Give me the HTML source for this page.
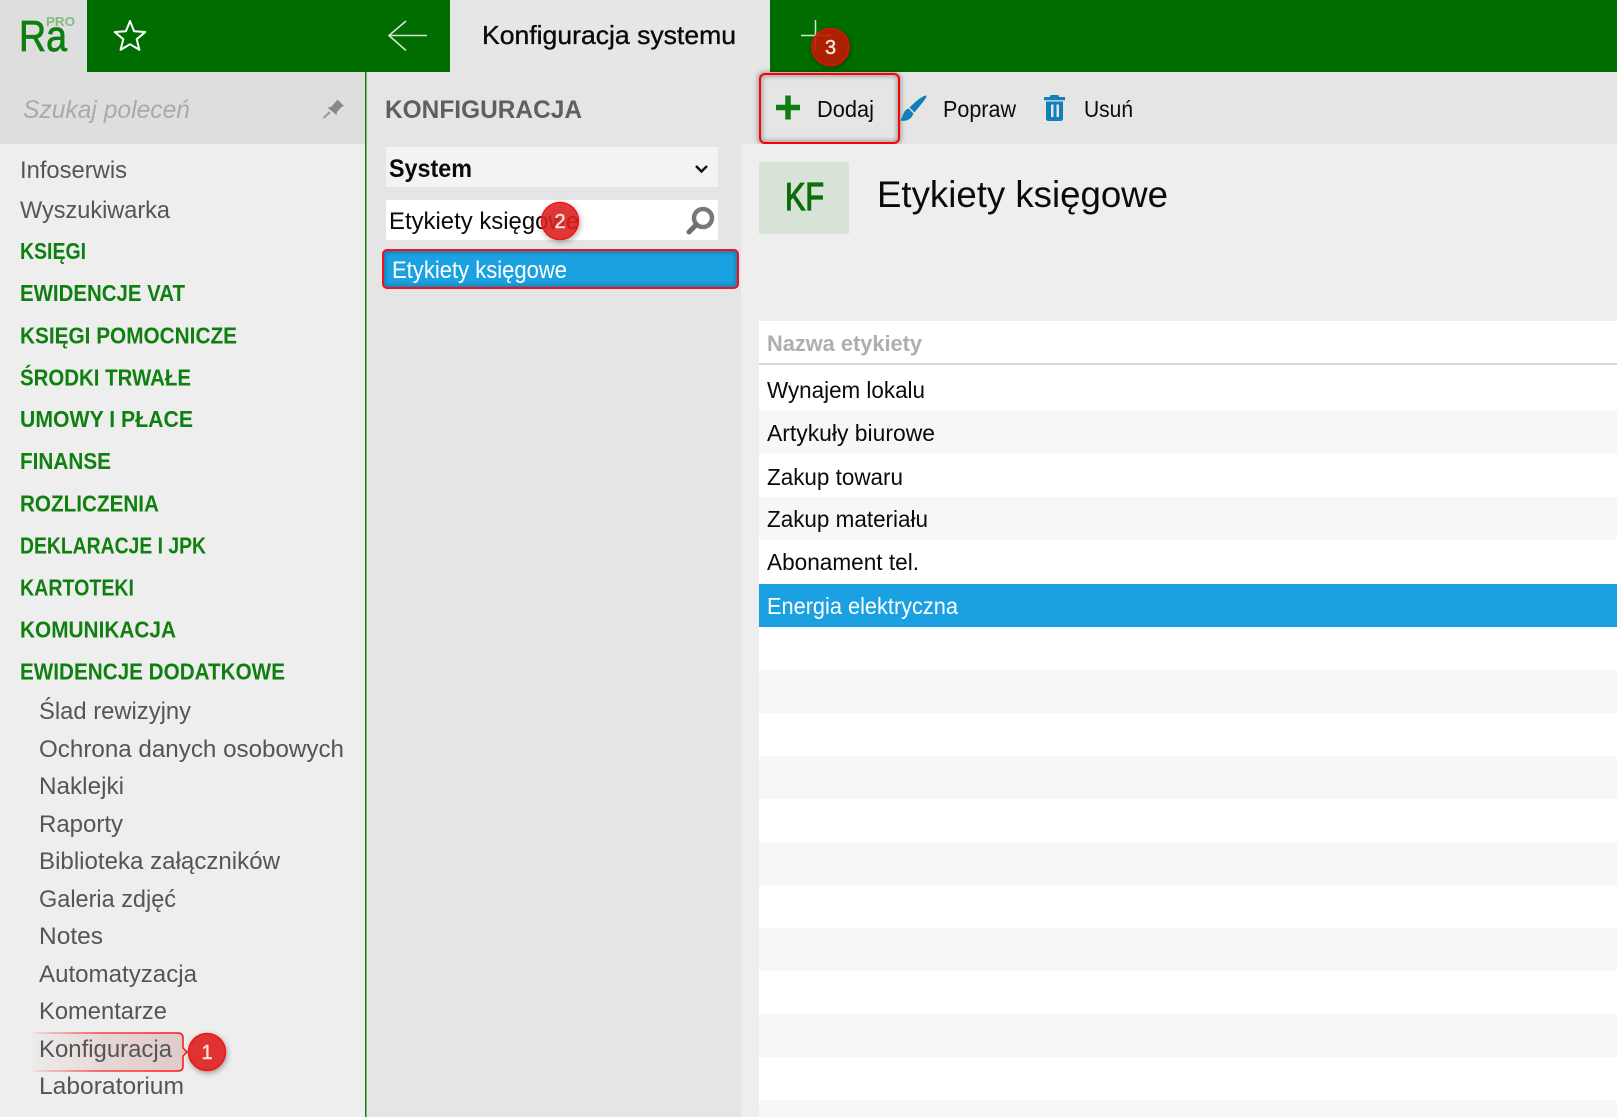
<!DOCTYPE html>
<html><head><meta charset="utf-8"><style>
html,body{margin:0;padding:0;width:1617px;height:1117px;overflow:hidden;background:#eee}
svg{display:block}
text{font-family:"Liberation Sans",sans-serif;white-space:pre}
.s{font-size:24px;fill:#555}
.b{font-size:23px;font-weight:bold;fill:#0f7f0f}
.r{font-size:23px;fill:#0a0a0a}
</style></head><body>
<svg width="1617" height="1117" viewBox="0 0 1617 1117" xmlns="http://www.w3.org/2000/svg">
<defs>
<linearGradient id="g1" x1="0" x2="1"><stop offset="0" stop-color="#eadcdc" stop-opacity=".2"/><stop offset=".5" stop-color="#e6d6d6"/><stop offset="1" stop-color="#dfc9c9"/></linearGradient>
<linearGradient id="g2" x1="0" x2="1"><stop offset="0" stop-color="#ff2020" stop-opacity=".1"/><stop offset=".4" stop-color="#ff2020" stop-opacity=".8"/><stop offset="1" stop-color="#ff1010"/></linearGradient>
<filter id="sh" x="-30%" y="-30%" width="160%" height="160%"><feDropShadow dx="1" dy="2" stdDeviation="3" flood-color="#000" flood-opacity=".35"/></filter>
<filter id="bl" x="-10%" y="-20%" width="120%" height="140%"><feGaussianBlur stdDeviation="2.500"/></filter>
<clipPath id="rowclip"><rect x="383" y="250" width="355" height="38" rx="4"/></clipPath>
</defs>
<rect width="1617" height="1117" fill="#eee"/>
<!-- header -->
<rect x="0" y="0" width="87" height="72" fill="#dedede"/>
<rect x="87" y="0" width="363" height="72" fill="#006d00"/>
<rect x="450" y="0" width="320" height="72" fill="#e6e6e6"/>
<rect x="770" y="0" width="847" height="72" fill="#006d00"/>
<text x="19" y="51" font-size="44" fill="#0e7e0e" stroke="#0e7e0e" stroke-width=".8" textLength="48" lengthAdjust="spacingAndGlyphs">Ra</text>
<text x="46" y="26" font-size="12.500" font-weight="bold" fill="#84b984" textLength="29" lengthAdjust="spacingAndGlyphs">PRO</text>
<path d="M130 21L134.100 31.300 145.200 32.060 136.700 39.200 139.400 49.900 130 44.200 120.600 49.900 123.300 39.200 114.800 32.060 125.900 31.300Z" fill="none" stroke="#fff" stroke-width="2" stroke-linejoin="round"/>
<path d="M427 35.500H389M406 21l-17 14.500 17 15" fill="none" stroke="#d5e6d5" stroke-width="1.600"/>
<text x="482" y="44" font-size="26" fill="#0a0a0a" stroke="#0a0a0a" stroke-width=".35" textLength="254" lengthAdjust="spacingAndGlyphs">Konfiguracja systemu</text>
<path d="M801 35.500H831M815.500 20V50" stroke="#d5e6d5" stroke-width="1.500" fill="none"/>
<!-- sidebar -->
<rect x="0" y="72" width="365" height="72" fill="#dedede"/>
<text x="23" y="118" font-size="25" font-style="italic" fill="#aaa" textLength="167" lengthAdjust="spacingAndGlyphs">Szukaj poleceń</text>
<path d="M337.500 99.500L344 106 341.500 107 337 112 336.500 115 327.500 107.500 331 107 335.500 102Z" fill="#888"/>
<path d="M330 112L323.500 118" stroke="#999" stroke-width="2" fill="none"/>
<rect x="365" y="72" width="1.500" height="1045" fill="#0f7f0f"/>
<text class="s" x="20" y="178" textLength="107" lengthAdjust="spacingAndGlyphs">Infoserwis</text>
<text class="s" x="20" y="218" textLength="150" lengthAdjust="spacingAndGlyphs">Wyszukiwarka</text>
<text class="b" x="20" y="259" textLength="66" lengthAdjust="spacingAndGlyphs">KSIĘGI</text>
<text class="b" x="20" y="301" textLength="165" lengthAdjust="spacingAndGlyphs">EWIDENCJE VAT</text>
<text class="b" x="20" y="343.500" textLength="217" lengthAdjust="spacingAndGlyphs">KSIĘGI POMOCNICZE</text>
<text class="b" x="20" y="385.500" textLength="171" lengthAdjust="spacingAndGlyphs">ŚRODKI TRWAŁE</text>
<text class="b" x="20" y="427" textLength="173" lengthAdjust="spacingAndGlyphs">UMOWY I PŁACE</text>
<text class="b" x="20" y="469" textLength="91" lengthAdjust="spacingAndGlyphs">FINANSE</text>
<text class="b" x="20" y="511.500" textLength="139" lengthAdjust="spacingAndGlyphs">ROZLICZENIA</text>
<text class="b" x="20" y="553.500" textLength="186" lengthAdjust="spacingAndGlyphs">DEKLARACJE I JPK</text>
<text class="b" x="20" y="595.500" textLength="114" lengthAdjust="spacingAndGlyphs">KARTOTEKI</text>
<text class="b" x="20" y="637.500" textLength="156" lengthAdjust="spacingAndGlyphs">KOMUNIKACJA</text>
<text class="b" x="20" y="679.500" textLength="265" lengthAdjust="spacingAndGlyphs">EWIDENCJE DODATKOWE</text>
<text class="s" x="39" y="719" textLength="152" lengthAdjust="spacingAndGlyphs">Ślad rewizyjny</text>
<text class="s" x="39" y="757" textLength="305" lengthAdjust="spacingAndGlyphs">Ochrona danych osobowych</text>
<text class="s" x="39" y="794" textLength="85" lengthAdjust="spacingAndGlyphs">Naklejki</text>
<text class="s" x="39" y="832" textLength="84" lengthAdjust="spacingAndGlyphs">Raporty</text>
<text class="s" x="39" y="869" textLength="241" lengthAdjust="spacingAndGlyphs">Biblioteka załączników</text>
<text class="s" x="39" y="907" textLength="137" lengthAdjust="spacingAndGlyphs">Galeria zdjęć</text>
<text class="s" x="39" y="944" textLength="64" lengthAdjust="spacingAndGlyphs">Notes</text>
<text class="s" x="39" y="982" textLength="158" lengthAdjust="spacingAndGlyphs">Automatyzacja</text>
<text class="s" x="39" y="1019" textLength="128" lengthAdjust="spacingAndGlyphs">Komentarze</text>
<path d="M33 1033H178q5 0 5 5v10l4 4-4 4v10q0 5-5 5H33z" fill="url(#g1)"/>
<path d="M33 1033H178q5 0 5 5v10l4 4-4 4v10q0 5-5 5H33" fill="none" stroke="url(#g2)" stroke-width="1.500"/>
<text class="s" x="39" y="1057" textLength="133" lengthAdjust="spacingAndGlyphs">Konfiguracja</text>
<text class="s" x="39" y="1094" textLength="145" lengthAdjust="spacingAndGlyphs">Laboratorium</text>
<!-- middle column -->
<rect x="366.500" y="72" width="374" height="1045" fill="#e5e5e5"/>
<text x="385" y="118" font-size="25" font-weight="bold" fill="#5f5f5f" textLength="197" lengthAdjust="spacingAndGlyphs">KONFIGURACJA</text>
<rect x="386" y="147" width="332" height="40" fill="#f3f3f3"/>
<text x="389" y="177" font-size="25" font-weight="bold" fill="#0a0a0a" textLength="83" lengthAdjust="spacingAndGlyphs">System</text>
<path d="M696 166l5.500 5.500 5.500-5.500" fill="none" stroke="#111" stroke-width="2.500"/>
<rect x="386" y="200" width="332" height="40" fill="#fff"/>
<text x="389" y="229" font-size="24" fill="#0a0a0a" textLength="190" lengthAdjust="spacingAndGlyphs">Etykiety księgowe</text>
<circle cx="703" cy="218" r="9" fill="none" stroke="#787878" stroke-width="4.500"/>
<path d="M696 225L689 232" stroke="#6e6e6e" stroke-width="5" stroke-linecap="round"/>
<rect x="383" y="250" width="355" height="38" rx="4" fill="#1ba1e2"/>
<g clip-path="url(#rowclip)"><rect x="383" y="250" width="355" height="38" rx="4" fill="none" stroke="#000" stroke-opacity=".25" stroke-width="5" filter="url(#bl)"/></g>
<rect x="383" y="250" width="355" height="38" rx="4" fill="none" stroke="#f01020" stroke-width="2"/>
<text x="392" y="278" font-size="24" fill="#fff" textLength="175" lengthAdjust="spacingAndGlyphs">Etykiety księgowe</text>
<!-- toolbar -->
<rect x="740.500" y="72" width="877" height="72" fill="#e5e5e5"/>
<rect x="760" y="74" width="139" height="69" rx="5" fill="none" stroke="#000" stroke-opacity=".3" stroke-width="5" filter="url(#bl)"/>
<rect x="760" y="74" width="139" height="69" rx="5" fill="none" stroke="#f00" stroke-width="2"/>
<path d="M788 95.500v24M776 107.500h24" stroke="#0e7e0e" stroke-width="5.500" fill="none"/>
<text class="r" x="817" y="117" textLength="57" lengthAdjust="spacingAndGlyphs">Dodaj</text>
<path d="M926.500 95.500C927.500 97 921 104.500 914.500 112.500 912 110 910.500 108.500 909.500 107.500 915 102 923 95 926.500 95.500Z" fill="#1180b8"/>
<path d="M908.500 108.500C904 110 903.500 114 902 117 901.500 118.500 900.500 120 900 120.500 905 121.500 911 120.500 913.500 113.500Z" fill="#1180b8"/>
<text class="r" x="943" y="117" textLength="73" lengthAdjust="spacingAndGlyphs">Popraw</text>
<path d="M1044 97h21v3.200h-21zM1050 97v-.5q0-1.500 1.500-1.500h6q1.500 0 1.500 1.500v.5z" fill="#1180b8"/>
<path fill-rule="evenodd" d="M1046 101.500h17v17q0 2.500-2.500 2.500h-12q-2.500 0-2.500-2.500zM1051 104.500v12.500h2.500v-12.500zM1056.500 104.500v12.500h2.500v-12.500z" fill="#1180b8"/>
<text class="r" x="1084" y="117" textLength="49" lengthAdjust="spacingAndGlyphs">Usuń</text>
<!-- content -->
<rect x="740.500" y="144" width="877" height="973" fill="#eee"/>
<rect x="740" y="144" width="1" height="973" fill="#e3e3e3"/>
<rect x="759" y="162" width="90" height="72" fill="#d8e3d8"/>
<text x="785" y="210" font-size="39" fill="#0a6e0a" stroke="#0a6e0a" stroke-width="1.300" textLength="39" lengthAdjust="spacingAndGlyphs">KF</text>
<text x="877" y="207" font-size="37" fill="#0a0a0a" textLength="291" lengthAdjust="spacingAndGlyphs">Etykiety księgowe</text>
<!-- table -->
<rect x="759" y="321" width="858" height="796" fill="#fff"/>
<rect x="759" y="363" width="858" height="2" fill="#d8d8d8"/>
<text x="767" y="351" font-size="22" font-weight="bold" fill="#aeaeae" textLength="155" lengthAdjust="spacingAndGlyphs">Nazwa etykiety</text>
<rect x="759" y="411" width="858" height="43" fill="#f7f7f7"/>
<rect x="759" y="497" width="858" height="43" fill="#f7f7f7"/>
<rect x="759" y="584" width="858" height="43" fill="#1ba1e2"/>
<rect x="759" y="670" width="858" height="43" fill="#f7f7f7"/>
<rect x="759" y="756" width="858" height="43" fill="#f7f7f7"/>
<rect x="759" y="842" width="858" height="43" fill="#f7f7f7"/>
<rect x="759" y="928" width="858" height="43" fill="#f7f7f7"/>
<rect x="759" y="1014" width="858" height="43" fill="#f7f7f7"/>
<rect x="759" y="1100" width="858" height="17" fill="#f7f7f7"/>
<text class="r" x="767" y="398" textLength="158" lengthAdjust="spacingAndGlyphs">Wynajem lokalu</text>
<text class="r" x="767" y="441" textLength="168" lengthAdjust="spacingAndGlyphs">Artykuły biurowe</text>
<text class="r" x="767" y="485" textLength="136" lengthAdjust="spacingAndGlyphs">Zakup towaru</text>
<text class="r" x="767" y="527" textLength="161" lengthAdjust="spacingAndGlyphs">Zakup materiału</text>
<text class="r" x="767" y="570" textLength="152" lengthAdjust="spacingAndGlyphs">Abonament tel.</text>
<text class="r" x="767" y="614" style="fill:#fff" textLength="191" lengthAdjust="spacingAndGlyphs">Energia elektryczna</text>
<!-- badges -->
<g filter="url(#sh)">
<circle cx="207" cy="1052" r="18.500" fill="#e03030" stroke="#f01818" stroke-width="1.500"/>
<circle cx="560" cy="221" r="18.500" fill="#e02020" fill-opacity=".85" stroke="#f01818" stroke-width="1.500"/>
<circle cx="830.500" cy="47" r="18.500" fill="#c21a05" fill-opacity=".85" stroke="#e81010" stroke-width="1.500"/>
</g>
<text x="207" y="1059" font-size="20" fill="#f8e0e0" stroke="#f8e0e0" stroke-width=".5" text-anchor="middle">1</text>
<text x="560" y="228" font-size="20" fill="#f8e0e0" stroke="#f8e0e0" stroke-width=".5" text-anchor="middle">2</text>
<text x="830.500" y="54" font-size="20" fill="#f4e0d8" stroke="#f4e0d8" stroke-width=".5" text-anchor="middle">3</text>
</svg>
</body></html>
